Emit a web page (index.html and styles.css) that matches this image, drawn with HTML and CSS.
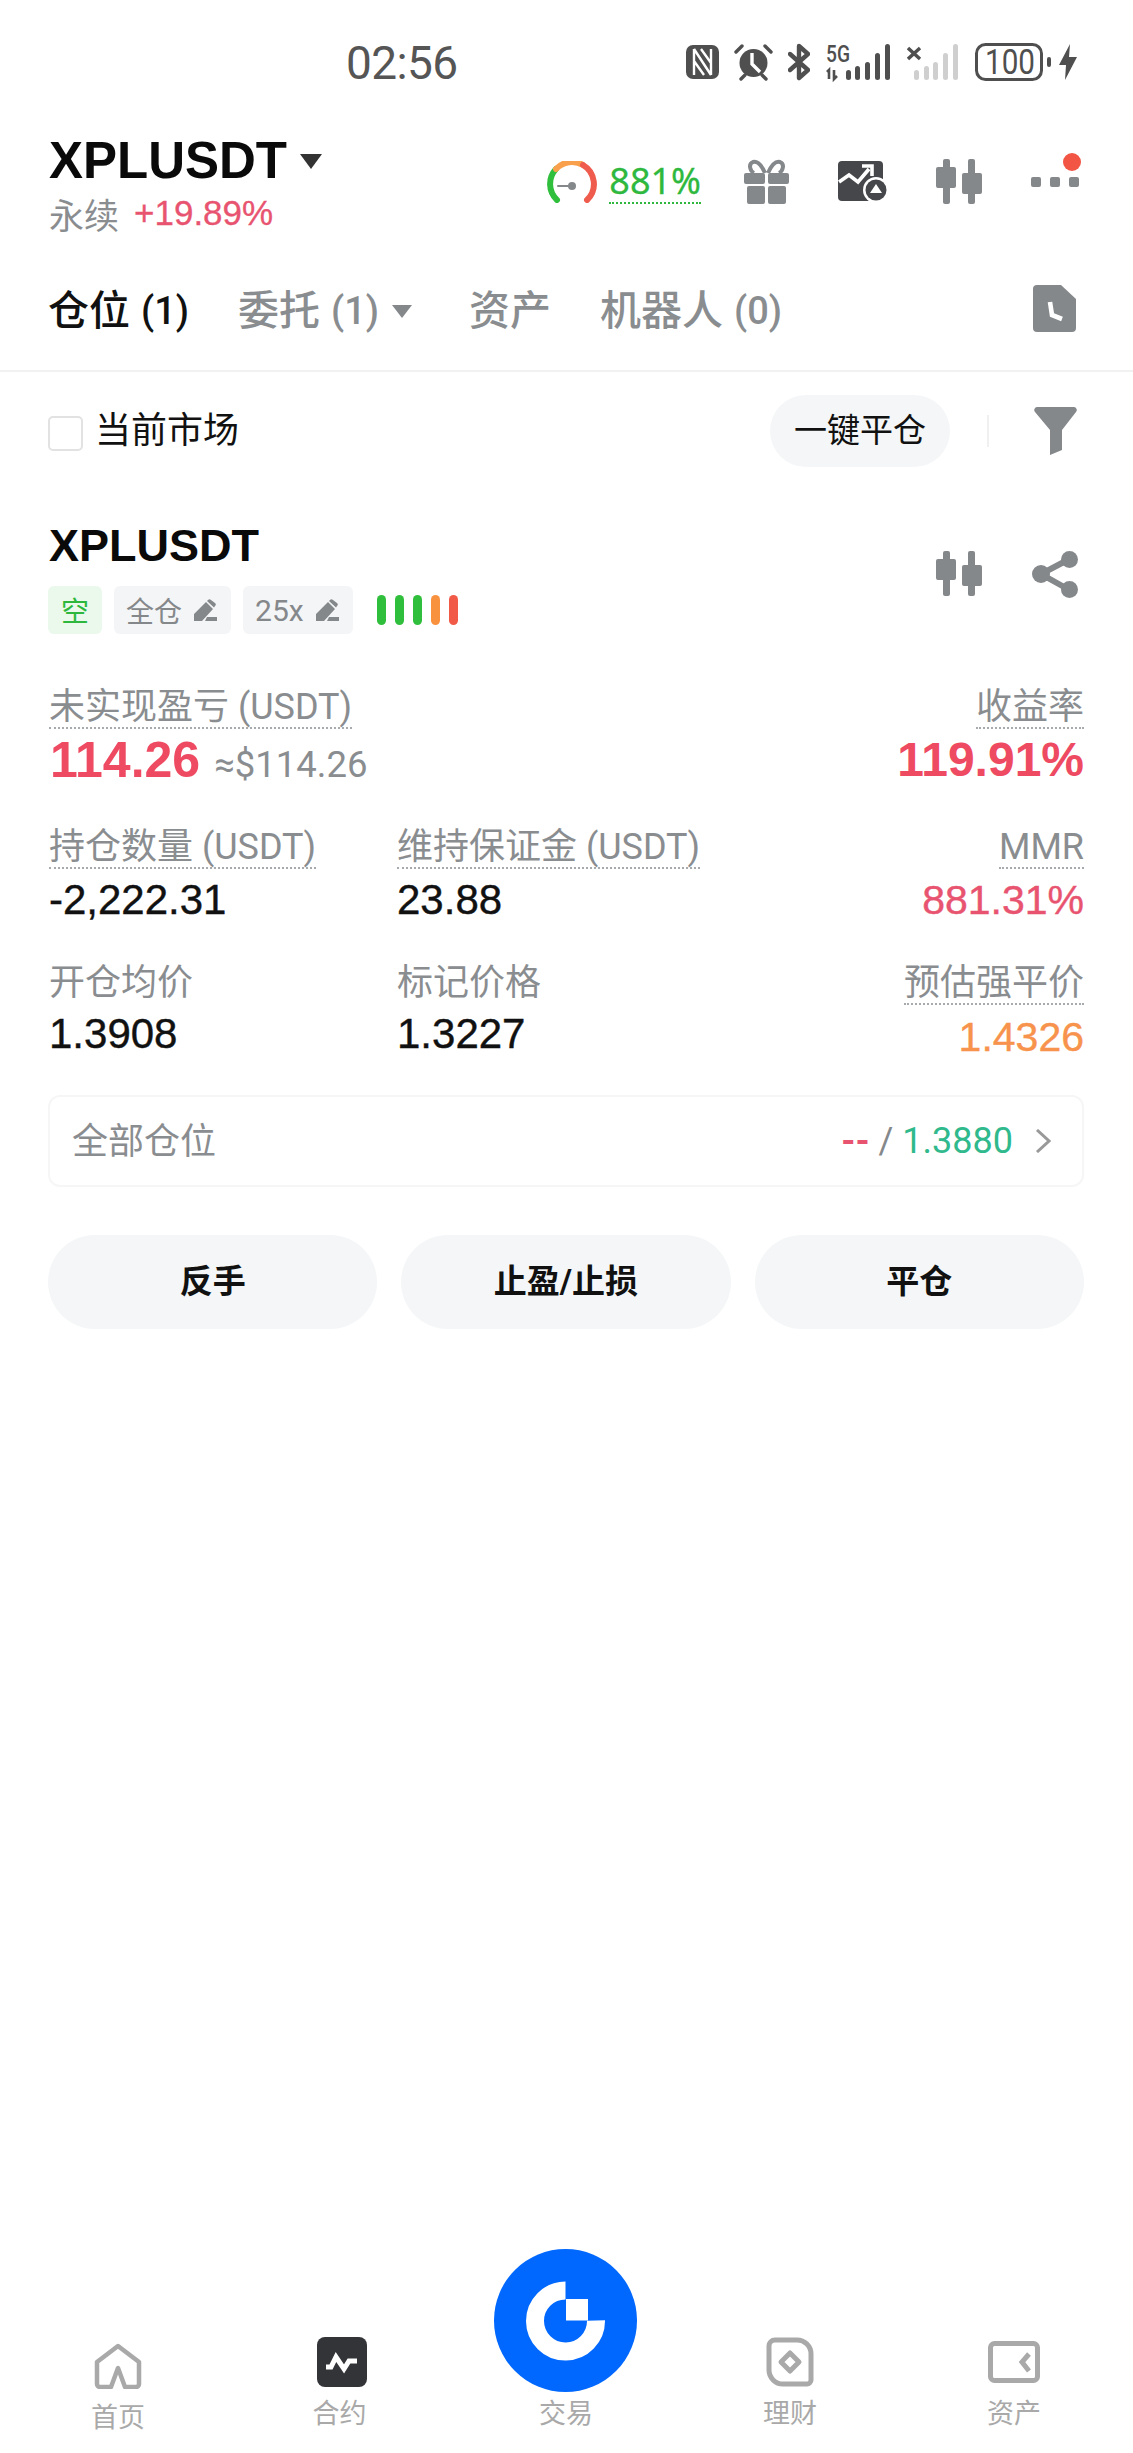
FILE: index.html
```html
<!DOCTYPE html>
<html lang="zh-CN">
<head>
	<meta charset="UTF-8">
	<title>XPLUSDT 仓位</title>
	<link rel="stylesheet" href="styles.css">
</head>
<body>
<div class="page">

	<div class="status">
		<div class="time">02:56</div>
		<div class="status-icons">
			<svg width="33" height="38" viewBox="0 0 33 38"><rect y="2" width="33" height="34" rx="7" fill="#4f4f4f"/><path d="M8 6V32M25 6V32M8 6L25 32M15 6L25 20M8 18L18 32" stroke="#fff" stroke-width="2.4" fill="none"/></svg>
			<svg width="39" height="38" viewBox="0 0 39 38"><circle cx="19.5" cy="20" r="14" fill="#4f4f4f"/><path d="M2 9L8 3M37 9L31 3M7 36L11 32M32 36L28 32" stroke="#4f4f4f" stroke-width="3.4" stroke-linecap="round"/><path d="M18 10V21L26 29" stroke="#fff" stroke-width="3.4" fill="none"/></svg>
			<svg width="22" height="38" viewBox="0 0 22 38"><path d="M2 11L20 27L11 35V3L20 11L2 27" stroke="#4f4f4f" stroke-width="4.4" fill="none" stroke-linecap="round" stroke-linejoin="round"/></svg>
			<svg class="net" width="65" height="46" viewBox="0 -4 65 46"><text x="0" y="19" class="net-label" textLength="24" lengthAdjust="spacingAndGlyphs">5G</text><path d="M3 36V27L1 29M8 27V36L11 33" stroke="#4f4f4f" stroke-width="2.6" fill="none"/><rect x="20" y="27" width="5" height="10" rx="2.5" fill="#4f4f4f"/><rect x="29" y="23" width="5" height="14" rx="2.5" fill="#4f4f4f"/><rect x="39" y="19" width="5" height="18" rx="2.5" fill="#4f4f4f"/><rect x="49" y="10" width="5" height="27" rx="2.5" fill="#4f4f4f"/><rect x="59" y="1" width="5" height="36" rx="2.5" fill="#4f4f4f"/></svg>
			<svg class="net" width="52" height="46" viewBox="0 -4 52 46"><path d="M1 5L13 16M13 5L1 16" stroke="#4f4f4f" stroke-width="3.4"/><rect x="7" y="27" width="5" height="10" rx="2.5" fill="#cfcfcf"/><rect x="17" y="23" width="5" height="14" rx="2.5" fill="#cfcfcf"/><rect x="26" y="19" width="5" height="18" rx="2.5" fill="#cfcfcf"/><rect x="36" y="10" width="5" height="27" rx="2.5" fill="#cfcfcf"/><rect x="46" y="1" width="5" height="36" rx="2.5" fill="#cfcfcf"/></svg>
			<svg class="net" width="76" height="46" viewBox="0 -4 76 46"><rect x="1.5" y="1.5" width="65" height="35" rx="9" fill="none" stroke="#4f4f4f" stroke-width="3"/><text x="10" y="31" class="batt-label" textLength="50" lengthAdjust="spacingAndGlyphs">100</text><rect x="72" y="14" width="4" height="10" rx="2" fill="#4f4f4f"/></svg>
			<svg class="bolt" width="18" height="38" viewBox="0 0 18 38"><path d="M11 1L0 22H7L6 37L18 14H10Z" fill="#4f4f4f"/></svg>
		</div>
	</div>

	<div class="head">
		<div class="head-left">
			<div class="symbol">XPLUSDT<span class="symbol-arrow"></span></div>
			<div class="sub"><span class="sub-name">永续</span><span class="sub-rate">+19.89%</span></div>
		</div>
		<div class="actions">
			<svg width="50" height="42" viewBox="0 0 50 42" fill="none" stroke-width="6" stroke-linecap="round"><path d="M10 39A22 22 0 0 1 9 8" stroke="#2fbf3c"/><path d="M9 8A22 22 0 0 1 36 4" stroke="#f9a04c"/><path d="M36 4A22 22 0 0 1 40 39" stroke="#ef5b4c"/><circle cx="25" cy="25" r="4" fill="#85888b" stroke="none"/><path d="M11 25H22" stroke="#85888b" stroke-width="2"/></svg>
			<span class="risk">881%</span>
			<svg class="act-gift" width="45" height="45" viewBox="0 0 45 45" fill="#85888b"><path d="M21 14C17 5 13 2 9 3C4 5 6 12 10 14M24 14C28 5 32 2 36 3C41 5 39 12 35 14" fill="none" stroke="#85888b" stroke-width="4"/><rect y="14" width="21" height="11" rx="2"/><rect x="24" y="14" width="21" height="11" rx="2"/><rect x="3" y="27" width="18" height="18" rx="2"/><rect x="24" y="27" width="18" height="18" rx="2"/></svg>
			<svg class="act-chart" width="50" height="41" viewBox="0 0 50 41"><rect width="45" height="40" rx="4" fill="#45474b"/><path d="M1 21L11 14L20 21L31 8" fill="none" stroke="#fff" stroke-width="3.6"/><path d="M24 5H34V15" fill="none" stroke="#fff" stroke-width="3.6"/><circle cx="38" cy="29" r="13" fill="#fff"/><circle cx="38" cy="29" r="10.5" fill="#45474b"/><path d="M38 23L44 32H32Z" fill="#fff"/></svg>
			<svg class="act-candle" width="46" height="45" viewBox="0 0 46 45" fill="#85888b"><rect x="7" width="7" height="45" rx="2"/><rect y="8" width="20" height="21" rx="2"/><rect x="32" width="7" height="45" rx="2"/><rect x="26" y="14" width="20" height="21" rx="2"/></svg>
			<svg class="act-more" width="51" height="57" viewBox="0 0 51 57" fill="#85888b"><rect x="1" y="24" width="10" height="10" rx="2"/><rect x="20" y="24" width="10" height="10" rx="2"/><rect x="39" y="24" width="10" height="10" rx="2"/><circle cx="42" cy="9" r="9" fill="#f25544"/></svg>
		</div>
	</div>

	<div class="tabs">
		<div class="tab tab-on">仓位<span class="tab-count">(1)</span></div>
		<div class="tab">委托<span class="tab-count">(1)</span><span class="tab-arrow"></span></div>
		<div class="tab">资产</div>
		<div class="tab">机器人<span class="tab-count">(0)</span></div>
		<svg class="tab-doc" width="43" height="47" viewBox="0 0 43 47"><path d="M4 0H28L43 14V43A4 4 0 0 1 39 47H4A4 4 0 0 1 0 43V4A4 4 0 0 1 4 0Z" fill="#85888b"/><path d="M17 17L19 30L29 34" fill="none" stroke="#fff" stroke-width="4.6"/></svg>
	</div>

	<div class="filter">
		<span class="check"></span>
		<span class="filter-text">当前市场</span>
		<span class="close-all">一键平仓</span>
		<span class="filter-line"></span>
		<svg width="43" height="48" viewBox="0 0 43 48"><path d="M3 0H40A3 3 0 0 1 42 5L28 23V43L16 48V23L1 5A3 3 0 0 1 3 0Z" fill="#85888b"/></svg>
	</div>

	<div class="card">
		<div class="card-head">
			<div>
				<div class="card-title">XPLUSDT</div>
				<div class="tags">
					<span class="tag tag-side">空</span>
					<span class="tag">全仓
						<svg width="23" height="22" viewBox="0 0 23 22" fill="#85888b"><path d="M0 22V15L12 3L19 10L8 22ZM14 1A2 2 0 0 1 17 1L21 4A2 2 0 0 1 21 7L20 8.500L13 2ZM13 18H23V22H11Z"/></svg>
					</span>
					<span class="tag tag-lever">25x
						<svg width="23" height="22" viewBox="0 0 23 22" fill="#85888b"><path d="M0 22V15L12 3L19 10L8 22ZM14 1A2 2 0 0 1 17 1L21 4A2 2 0 0 1 21 7L20 8.500L13 2ZM13 18H23V22H11Z"/></svg>
					</span>
					<span class="bars">
						<i class="bar-green"></i><i class="bar-green"></i><i class="bar-green"></i><i class="bar-orange"></i><i class="bar-red"></i>
					</span>
				</div>
			</div>
			<div class="card-icons">
				<svg width="46" height="45" viewBox="0 0 46 45" fill="#85888b"><rect x="7" width="7" height="45" rx="2"/><rect y="8" width="20" height="21" rx="2"/><rect x="32" width="7" height="45" rx="2"/><rect x="26" y="14" width="20" height="21" rx="2"/></svg>
				<svg width="46" height="47" viewBox="0 0 46 47" fill="#85888b"><path d="M37.5 8L9 23L37.5 39" fill="none" stroke="#85888b" stroke-width="6"/><circle cx="9" cy="23" r="9"/><circle cx="37.5" cy="8.5" r="8.5"/><circle cx="37.5" cy="38.5" r="8.5"/></svg>
			</div>
		</div>

		<div class="pnl-row">
			<div class="stat">
				<span class="label dotted">未实现盈亏 (USDT)</span>
				<div class="pnl"><span class="pnl-value">114.26</span><span class="pnl-usd">≈$114.26</span></div>
			</div>
			<div class="stat stat-right">
				<span class="label dotted">收益率</span>
				<span class="pnl-value pnl-rate">119.91%</span>
			</div>
		</div>

		<div class="stat-row">
			<div class="stat">
				<span class="label dotted">持仓数量 (USDT)</span>
				<span class="num">-2,222.31</span>
			</div>
			<div class="stat">
				<span class="label dotted">维持保证金 (USDT)</span>
				<span class="num">23.88</span>
			</div>
			<div class="stat stat-right">
				<span class="label dotted">MMR</span>
				<span class="num num-red">881.31%</span>
			</div>
		</div>

		<div class="stat-row stat-row-last">
			<div class="stat">
				<span class="label">开仓均价</span>
				<span class="num">1.3908</span>
			</div>
			<div class="stat">
				<span class="label">标记价格</span>
				<span class="num">1.3227</span>
			</div>
			<div class="stat stat-right">
				<span class="label dotted">预估强平价</span>
				<span class="num num-orange">1.4326</span>
			</div>
		</div>

		<div class="all-pos">
			<span class="all-name">全部仓位</span>
			<span class="all-val"><span class="all-red">--</span> <span class="all-sep">/</span> <span class="all-green">1.3880</span></span>
			<svg width="16" height="24" viewBox="0 0 16 24"><path d="M2 1L14 12L2 23" fill="none" stroke="#999" stroke-width="3"/></svg>
		</div>

		<div class="btns">
			<div class="btn">反手</div>
			<div class="btn">止盈/止损</div>
			<div class="btn">平仓</div>
		</div>
	</div>

	<div class="nav">
		<div class="nav-item nav-home">
			<div class="nav-icon">
				<svg width="48" height="46" viewBox="0 0 48 46"><path d="M24 3L45 19V41A3 3 0 0 1 42 44H31L24 25L17 44H6A3 3 0 0 1 3 41V19Z" fill="none" stroke="#a9a9a9" stroke-width="4.5" stroke-linejoin="round"/></svg>
			</div>
			<span class="nav-text">首页</span>
		</div>
		<div class="nav-item">
			<div class="nav-icon">
				<svg width="50" height="50" viewBox="0 0 50 50"><rect width="50" height="50" rx="8" fill="#333438"/><path d="M9 30H14L19 20L27 32L32 24H40" fill="none" stroke="#fff" stroke-width="5"/></svg>
			</div>
			<span class="nav-text nav-text-left">合约</span>
		</div>
		<div class="nav-item">
			<div class="nav-icon nav-trade">
				<svg width="143" height="143" viewBox="0 0 143 143"><circle cx="71.5" cy="71.5" r="71.5" fill="#0068ff"/><path d="M71.5 41.500A30.500 30.500 0 1 0 102 71.500" fill="none" stroke="#fff" stroke-width="18"/><rect x="72" y="50" width="22" height="21.500" fill="#fff"/></svg>
			</div>
			<span class="nav-text">交易</span>
		</div>
		<div class="nav-item">
			<div class="nav-icon">
				<svg width="48" height="50" viewBox="0 0 48 50"><path d="M9 3H31A14 14 0 0 1 45 17V43A4 4 0 0 1 41 47H17A14 14 0 0 1 3 33V9A6 6 0 0 1 9 3Z" fill="none" stroke="#a9a9a9" stroke-width="5"/><path d="M24 16L33 25L24 34L15 25Z" fill="none" stroke="#a9a9a9" stroke-width="5" stroke-linejoin="round"/></svg>
			</div>
			<span class="nav-text">理财</span>
		</div>
		<div class="nav-item">
			<div class="nav-icon nav-assets">
				<svg width="52" height="42" viewBox="0 0 52 42"><rect x="2.500" y="2.500" width="47" height="37" rx="4" fill="none" stroke="#a9a9a9" stroke-width="5"/><path d="M41 13L34 21L41 30" fill="none" stroke="#a9a9a9" stroke-width="5"/></svg>
			</div>
			<span class="nav-text">资产</span>
		</div>
	</div>

</div>
</body>
</html>
```

FILE: styles.css
```css
body{ margin: 0; padding: 0; background: #fff; font-family: Roboto, "Noto Sans CJK SC", sans-serif; color: #111; }
svg{ display: block; flex: none; }

.page{ display: flex; flex-direction: column; height: 2453px; overflow: hidden; }

/* status bar */
.status{ display: flex; height: 100px; box-sizing: border-box; padding: 43px 56px 0 346px; }
.time{ font-size: 46px; line-height: 40px; letter-spacing: -0.6px; color: #555; }
.status-icons{ display: flex; gap: 15px; margin-left: auto; height: 38px; }
.status-icons .net{ margin: -4px 0 0 1px; }
.status-icons .bolt{ margin-left: -7px; }
.net-label{ font-family: Roboto, sans-serif; font-size: 24px; font-weight: 500; fill: #4f4f4f; }
.batt-label{ font-family: Roboto, sans-serif; font-size: 35px; fill: #4f4f4f; }

/* title */
.head{ display: flex; justify-content: space-between; align-items: flex-start; padding: 36px 52px 0 49px; }
.symbol{ display: flex; align-items: center; font-family: "Liberation Sans", sans-serif; font-size: 51px; line-height: 50px; font-weight: bold; color: #0a0a0a; }
.symbol-arrow{ width: 0; height: 0; margin-left: 13px; border-left: 11px solid transparent; border-right: 11px solid transparent; border-top: 15px solid #333; }
.sub{ display: flex; align-items: center; height: 40px; margin-top: 7px; }
.sub-name{ font-size: 35px; color: #8a8d90; }
.sub-rate{ margin-left: 15px; font-family: "Liberation Sans", sans-serif; font-size: 35px; -webkit-text-stroke: 0.3px currentColor; color: #e85470; }

.actions{ display: flex; align-items: center; height: 45px; margin-top: 23px; }
.risk{ margin-left: 12px; font-family: "Noto Sans", sans-serif; font-size: 36px; line-height: 42px; height: 42px; -webkit-text-stroke: 0.3px currentColor; color: #2eb83e; border-bottom: 2px dotted #2eb83e; }
.act-gift{ margin-left: 43px; }
.act-chart{ margin-left: 49px; }
.act-candle{ margin-left: 48px; }
.act-more{ margin-left: 48px; }

/* tabs */
.tabs{ display: flex; align-items: center; gap: 49px; margin-top: 53px; padding: 0 57px 34px 48px; border-bottom: 2px solid #f1f1f1; }
.tab{ display: flex; align-items: center; font-size: 41px; line-height: 50px; font-weight: 500; color: #8a8d90; }
.tab-on{ color: #111; }
.tab-count{ margin-left: 11px; font-size: 38px; }
.tab-arrow{ width: 0; height: 0; margin: 0 8px 0 13px; border-left: 10px solid transparent; border-right: 10px solid transparent; border-top: 13px solid #85888b; }
.tab-doc{ margin: -5px 0 0 auto; }

/* filter */
.filter{ display: flex; align-items: center; padding: 23px 56px 0 48px; }
.check{ width: 35px; height: 35px; box-sizing: border-box; margin-top: 4px; border: 2px solid #e2e2e2; border-radius: 5px; }
.filter-text{ margin-left: 12px; font-size: 36px; line-height: 40px; color: #111; }
.close-all{ margin-left: auto; width: 180px; height: 72px; line-height: 72px; text-align: center; font-size: 33px; background: #f4f6f7; border-radius: 36px; }
.filter-line{ width: 2px; height: 32px; margin: 0 45px 0 37px; background: #f0f0f0; }

/* position card */
.card{ padding: 56px 49px 0; }
.card-head{ display: flex; justify-content: space-between; align-items: flex-start; }
.card-title{ font-family: "Liberation Sans", sans-serif; font-size: 45px; line-height: 46px; font-weight: bold; color: #0a0a0a; }
.card-icons{ display: flex; gap: 50px; margin: 28px 6px 0 0; }
.tags{ display: flex; align-items: center; gap: 12px; margin: 17px 0 0 -1px; }
.tag{ display: flex; align-items: center; gap: 12px; height: 48px; padding: 0 14px 0 12px; font-size: 28px; color: #85888b; background: #f4f5f6; border-radius: 6px; }
.tag-side{ padding: 0 13px; color: #2db83d; background: #ebf8ec; }
.tag-lever{ font-size: 30px; }
.bars{ display: flex; gap: 9px; margin-left: 12px; }
.bars i{ width: 9px; height: 30px; border-radius: 5px; }
.bar-green{ background: #2fbf3c; }
.bar-orange{ background: #f9923f; }
.bar-red{ background: #f15a47; }

.pnl-row{ display: flex; justify-content: space-between; margin-top: 50px; }
.stat-row{ display: grid; grid-template-columns: 348px 1fr 1fr; margin-top: 38px; }
.stat-row-last{ margin-top: 37px; }
.stat{ display: flex; flex-direction: column; align-items: flex-start; }
.stat-right{ align-items: flex-end; }
.label{ font-size: 36px; line-height: 40px; padding-top: 3px; color: #8a8d90; border-bottom: 2px solid transparent; }
.dotted{ border-bottom: 2px dotted #a8abad; }
.pnl{ display: flex; align-items: baseline; }
.pnl-value{ font-family: "Liberation Sans", sans-serif; font-size: 50px; line-height: 50px; margin-top: 6px; font-weight: bold; color: #ee4a62; }
.pnl .pnl-value{ margin-left: 1px; }
.pnl-rate{ font-size: 48px; }
.pnl-usd{ margin-left: 14px; font-size: 36.500px; color: #8a8d90; }
.num{ font-family: "Liberation Sans", sans-serif; font-size: 42px; line-height: 46px; margin-top: 8px; -webkit-text-stroke: 0.4px currentColor; color: #111; }
.stat-row-last .num{ margin-top: 6px; }
.num-red{ font-size: 41px; color: #e85470; }
.stat-row-last .num-orange{ margin-top: 9px; font-size: 41px; color: #f7934c; }

.all-pos{ display: flex; align-items: center; box-sizing: border-box; height: 92px; margin: 35px 0 0 -1px; padding: 0 31px 6px 22px; border: 2px solid #f6f6f6; border-radius: 12px; }
.all-name{ font-size: 36px; color: #8a8d90; }
.all-val{ margin: 6px 22px 0 auto; font-size: 36px; }
.all-red{ font-weight: bold; color: #e85470; }
.all-sep{ color: #85888b; }
.all-green{ color: #2fb98c; }
.all-pos svg{ margin-top: 6px; }

.btns{ display: flex; gap: 24px; margin: 48px 0 0 -1px; }
.btn{ flex: 1; height: 94px; line-height: 94px; text-align: center; font-size: 33px; font-weight: bold; color: #111; background: #f4f6f7; border-radius: 47px; }

/* bottom nav */
.nav{ display: grid; grid-template-columns: repeat(5, 224px); margin-top: auto; padding-left: 6px; height: 204px; }
.nav-item{ display: flex; flex-direction: column; align-items: center; }
.nav-icon{ display: flex; align-items: flex-end; height: 150px; padding-bottom: 12px; box-sizing: border-box; }
.nav-trade{ padding-bottom: 7px; margin-left: -2px; }
.nav-assets{ padding-bottom: 16px; }
.nav-home .nav-icon{ padding-bottom: 10px; }
.nav-home .nav-text{ margin-top: 4px; }
.nav-text{ font-size: 27px; line-height: 30px; color: #a9a9a9; }
.nav-text-left{ margin-left: -5px; }
```
